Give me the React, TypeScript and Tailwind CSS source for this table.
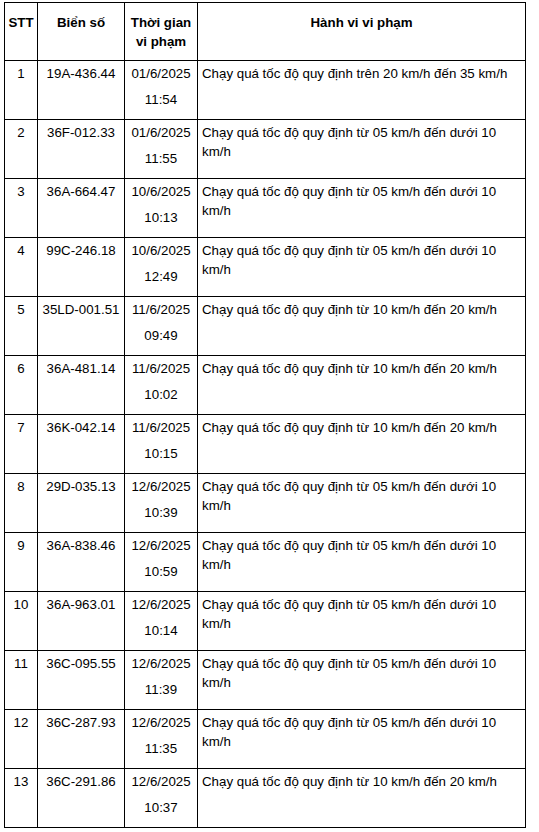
const rows: [string, string, string, string, string][] = [
  ["1", "19A-436.44", "01/6/2025", "11:54", "Chạy quá tốc độ quy định trên 20 km/h đến 35 km/h"],
  ["2", "36F-012.33", "01/6/2025", "11:55", "Chạy quá tốc độ quy định từ 05 km/h đến dưới 10 km/h"],
  ["3", "36A-664.47", "10/6/2025", "10:13", "Chạy quá tốc độ quy định từ 05 km/h đến dưới 10 km/h"],
  ["4", "99C-246.18", "10/6/2025", "12:49", "Chạy quá tốc độ quy định từ 05 km/h đến dưới 10 km/h"],
  ["5", "35LD-001.51", "11/6/2025", "09:49", "Chạy quá tốc độ quy định từ 10 km/h đến 20 km/h"],
  ["6", "36A-481.14", "11/6/2025", "10:02", "Chạy quá tốc độ quy định từ 10 km/h đến 20 km/h"],
  ["7", "36K-042.14", "11/6/2025", "10:15", "Chạy quá tốc độ quy định từ 10 km/h đến 20 km/h"],
  ["8", "29D-035.13", "12/6/2025", "10:39", "Chạy quá tốc độ quy định từ 05 km/h đến dưới 10 km/h"],
  ["9", "36A-838.46", "12/6/2025", "10:59", "Chạy quá tốc độ quy định từ 05 km/h đến dưới 10 km/h"],
  ["10", "36A-963.01", "12/6/2025", "10:14", "Chạy quá tốc độ quy định từ 05 km/h đến dưới 10 km/h"],
  ["11", "36C-095.55", "12/6/2025", "11:39", "Chạy quá tốc độ quy định từ 05 km/h đến dưới 10 km/h"],
  ["12", "36C-287.93", "12/6/2025", "11:35", "Chạy quá tốc độ quy định từ 05 km/h đến dưới 10 km/h"],
  ["13", "36C-291.86", "12/6/2025", "10:37", "Chạy quá tốc độ quy định từ 10 km/h đến 20 km/h"],
];

export default function App() {
  return (
    <div className="bg-white pl-[4px] pt-[2px] text-[13.3px] text-black font-['Liberation_Sans',Arial,sans-serif]">
      <table className="w-[522px] table-fixed border-collapse border border-black">
        <colgroup>
          <col className="w-[33px]" />
          <col className="w-[87px]" />
          <col className="w-[73px]" />
          <col />
        </colgroup>
        <thead>
          <tr className="h-[58px]">
            <th className="border border-black px-0 pt-[10px] align-top text-center font-bold leading-[19px]">STT</th>
            <th className="border border-black px-0 pt-[10px] align-top text-center font-bold leading-[19px]">Biển số</th>
            <th className="border border-black px-0 pt-[10px] align-top text-center font-bold leading-[19px]">
              Thời gian
              <br />
              vi phạm
            </th>
            <th className="border border-black px-1 pt-[10px] align-top text-center font-bold leading-[19px]">Hành vi vi phạm</th>
          </tr>
        </thead>
        <tbody>
          {rows.map(([stt, plate, date, time, desc]) => (
            <tr key={stt} className="h-[59px]">
              <td className="border border-black px-0 align-top text-center leading-[26px]">{stt}</td>
              <td className="border border-black px-0 align-top text-center leading-[26px]">{plate}</td>
              <td className="border border-black px-0 align-top text-center leading-[26px]">
                {date}
                <br />
                {time}
              </td>
              <td className="border border-black pl-[4px] pr-[3px] pt-[3px] align-top leading-[19px]">{desc}</td>
            </tr>
          ))}
        </tbody>
      </table>
    </div>
  );
}
